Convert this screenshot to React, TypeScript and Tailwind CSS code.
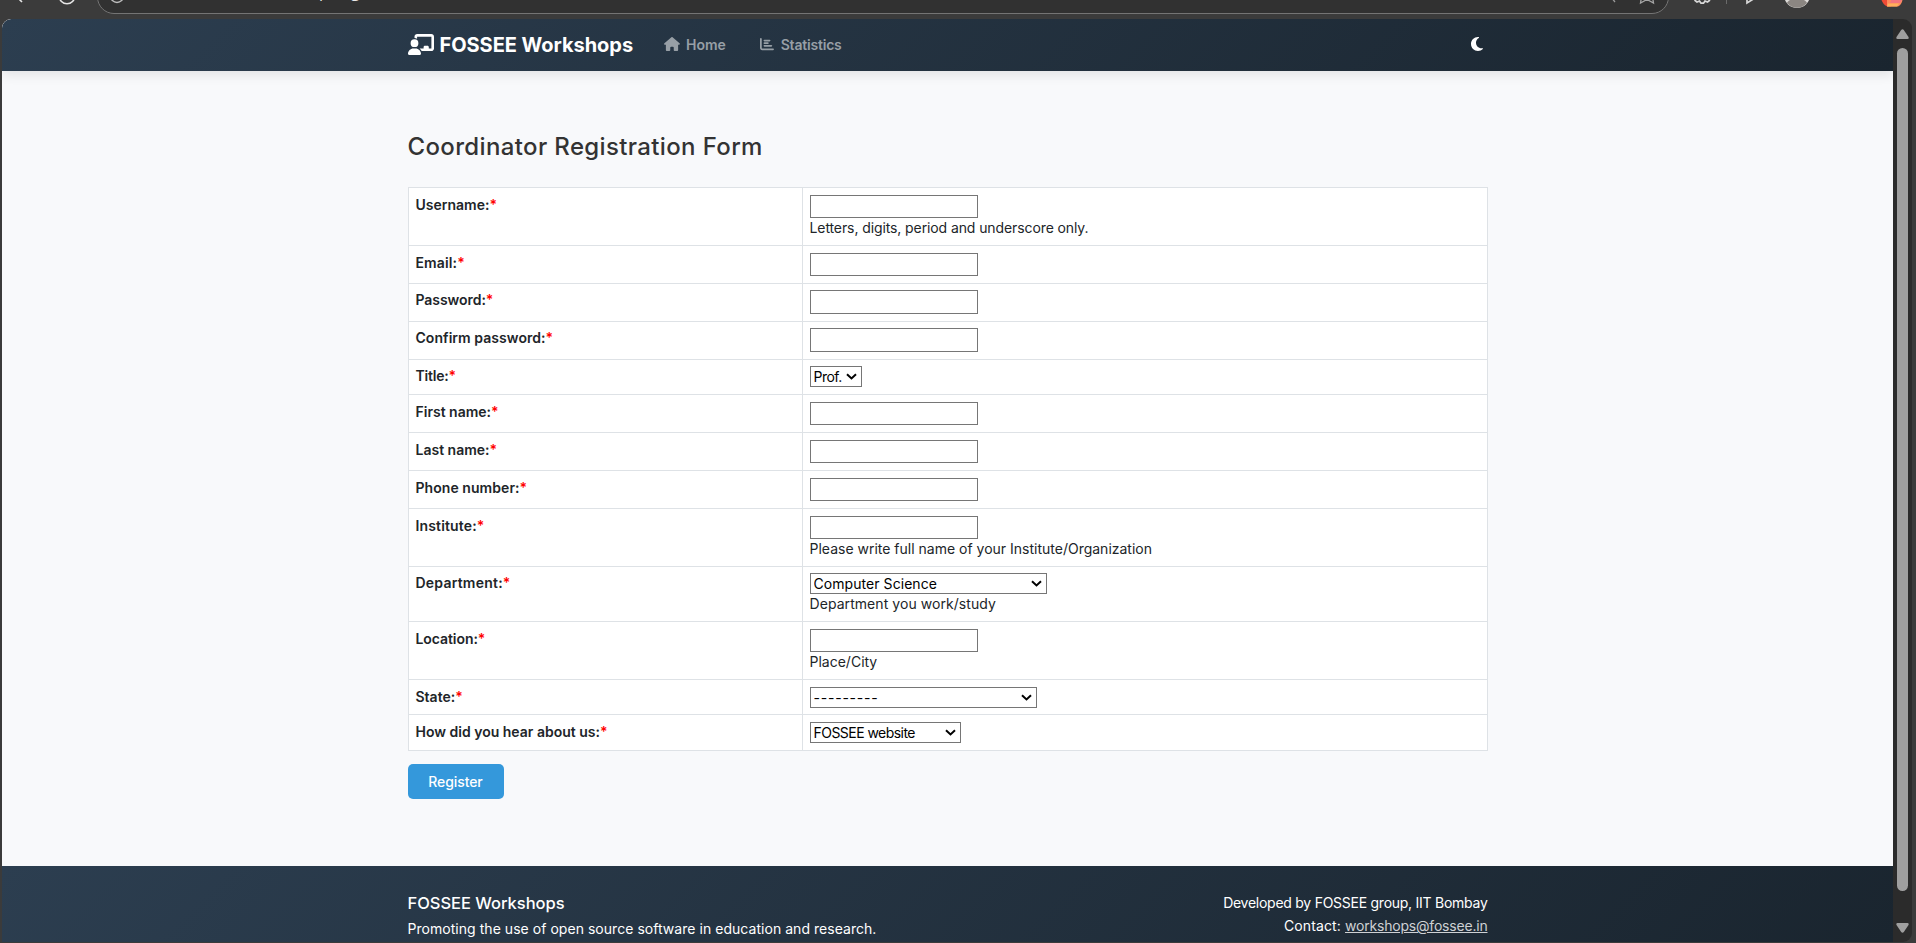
import { FaChalkboardUser, FaChartBar, FaHouse, FaMoon } from "react-icons/fa6";

type Row = {
  label: string;
  labelClass?: string;
  height: string;
  pad: string;
  field?: string;
  option?: string;
  optionClass?: string;
  help?: string;
  helpClass?: string;
};

const rows: Row[] = [
  { label: "Username:", height: "h-[58px]", pad: "pt-[7px]", field: "h-[23px]", help: "Letters, digits, period and underscore only.", helpClass: "tracking-[-0.1px]" },
  { label: "Email:", labelClass: "tracking-[0.12px]", height: "h-[38px]", pad: "pt-[7px]", field: "h-[23px]" },
  { label: "Password:", labelClass: "tracking-[-0.06px]", height: "h-[38px]", pad: "pt-[6px]", field: "h-[24px]" },
  { label: "Confirm password:", labelClass: "tracking-[0.05px]", height: "h-[38px]", pad: "pt-[6px]", field: "h-[24px]" },
  { label: "Title:", labelClass: "tracking-[-0.2px]", height: "h-[35px]", pad: "pt-[6px]", option: "Prof.", optionClass: "w-[52px] tracking-[-0.5px]" },
  { label: "First name:", height: "h-[38px]", pad: "pt-[7px]", field: "h-[23px]" },
  { label: "Last name:", height: "h-[38px]", pad: "pt-[7px]", field: "h-[23px]" },
  { label: "Phone number:", labelClass: "tracking-[0.06px]", height: "h-[38px]", pad: "pt-[7px]", field: "h-[23px]" },
  { label: "Institute:", labelClass: "tracking-[0.15px]", height: "h-[58px]", pad: "pt-[7px]", field: "h-[23px]", help: "Please write full name of your Institute/Organization" },
  { label: "Department:", labelClass: "tracking-[0.22px]", height: "h-[55px]", pad: "pt-[6px]", option: "Computer Science", optionClass: "w-[237px] tracking-[0.06px]", help: "Department you work/study", helpClass: "tracking-[0.06px]" },
  { label: "Location:", labelClass: "tracking-[-0.07px]", height: "h-[58px]", pad: "pt-[7px]", field: "h-[23px]", help: "Place/City" },
  { label: "State:", height: "h-[35px]", pad: "pt-[7px]", option: "---------", optionClass: "w-[227px] tracking-[0.78px] text-[#444]" },
  { label: "How did you hear about us:", height: "h-[36px]", pad: "pt-[7px]", option: "FOSSEE website", optionClass: "w-[151px] tracking-[-0.54px]" },
];

function Toolbar() {
  return (
    <div className="relative h-[19px] shrink-0 overflow-hidden bg-[#3b3b3b]">
      <div className="mt-[-20px] ml-[97px] flex h-[34px] w-[1572px] items-center rounded-full border border-[#747474] bg-[#313131] pl-[149px]">
        <span className="-mt-[12px] font-['Open_Sans',sans-serif] text-[16px] tracking-[0.25px] text-[#e8e8e8]">/workshop/register/</span>
      </div>
      <svg className="absolute top-0 left-0" width="140" height="14" fill="none" stroke="#e6e6e6" strokeWidth="1.6">
        <path d="M17 -3 L22 2" />
        <circle cx="67" cy="-4" r="7.8" />
        <circle cx="117" cy="-4" r="6.5" stroke="#bdbdbd" strokeWidth="1.4" />
      </svg>
      <svg className="absolute top-0 right-0" width="326" height="19" fill="none" stroke="#d8d8d8" strokeWidth="1.5">
        <path d="M21 -3 L25 2" stroke="#9a9a9a" strokeWidth="1.3" />
        <path d="M51.5 -3 L50.5 3 L57 -0.5 L63.5 3 L62.5 -3" stroke="#a5a5a5" strokeWidth="1.3" />
        <path d="M104.5 0 L107 2 L109.5 1 L111 3.2 H113.5 L115 1 L117.5 2 L120 0" strokeWidth="1.7" />
        <path d="M136.5 0 V4" stroke="#6a6a6a" strokeWidth="1" />
        <path d="M157 -4 V3 L165 -2" strokeWidth="1.7" />
        <circle cx="207" cy="-5" r="13" fill="#dedcda" stroke="none" />
        <path d="M197 3 C200 -3 214 -3 217 3 C212 9.3 202 9.3 197 3Z" fill="#8b8682" stroke="none" />
        <path d="M291 -2 H297 L301 6.5 H298 C294 6 292 2 291 -2Z" fill="#ef4b35" stroke="none" />
        <path d="M297 -2 H313 C312 3 310 6.5 307 6.5 H297Z" fill="#ff8b5e" stroke="none" />
        <path d="M302 -2 H313 L310 3 H300Z" fill="#f4757e" stroke="none" />
        <path d="M298 3.5 H309 L307 6.5 H297Z" fill="#ffb05c" stroke="none" />
      </svg>
    </div>
  );
}

function Navbar() {
  return (
    <nav className="relative z-10 flex h-[52px] shrink-0 justify-center rounded-tl-[9px] bg-linear-135 from-[#2c3e50] to-[#1a252f] shadow-[0_4px_12px_rgba(0,0,0,0.09)]">
      <div className="flex w-[1080px] items-center pb-[1px]">
        <FaChalkboardUser className="h-[21px] w-[26px] text-white" />
        <span className="ml-[6px] text-[20px] font-bold tracking-[-0.04px] text-white">FOSSEE Workshops</span>
        <a className="ml-[31px] flex items-center pb-[1px] text-[14px] font-semibold text-[#979fa6]">
          <FaHouse className="mr-[6px] h-[14px] w-[16px]" />
          <span className="tracking-[-0.05px]">Home</span>
        </a>
        <a className="ml-[34px] flex items-center pb-[1px] text-[14px] font-semibold text-[#979fa6]">
          <FaChartBar className="mr-[7px] h-[14px] w-[14px]" />
          <span className="tracking-[-0.2px]">Statistics</span>
        </a>
        <FaMoon className="mr-[3px] mb-[1px] ml-auto h-[16px] w-[16px] text-white" />
      </div>
    </nav>
  );
}

function SelectBox({ option, className }: { option: string; className?: string }) {
  return (
    <div className="relative flex w-fit">
      <select className={"h-[21px] appearance-none border border-[#767676] bg-white pr-0 pl-[3px] text-[14px] leading-[19px] text-black " + (className ?? "")}>
        <option>{option}</option>
      </select>
      <svg className="pointer-events-none absolute top-[7px] right-[5px]" width="11" height="8" viewBox="0 0 11 8" fill="none" stroke="#000" strokeWidth="2">
        <path d="M1 1.2 L5.5 5.4 L10 1.2" />
      </svg>
    </div>
  );
}

function FormRow({ row }: { row: Row }) {
  return (
    <div className={"flex border-b border-[#dee2e6] bg-white " + row.height}>
      <div className={"w-[394px] border-r border-[#dee2e6] pl-[7px] text-[14px] leading-[20px] font-semibold text-[#212529] " + row.pad}>
        <label className={row.labelClass}>{row.label}</label>
        <span className="text-[#ff0000]">*</span>
      </div>
      <div className={"flex flex-1 flex-col items-start border-r border-[#dee2e6] pl-[7px] " + row.pad}>
        {row.option ? (
          <SelectBox option={row.option} className={row.optionClass} />
        ) : (
          <input className={"w-[168px] shrink-0 border border-[#767676] bg-white " + (row.field ?? "")} />
        )}
        {row.help && <span className={"text-[14px] leading-[19px] text-[#212529] " + (row.helpClass ?? "")}>{row.help}</span>}
      </div>
    </div>
  );
}

function Scrollbar() {
  return (
    <div className="flex w-[19px] shrink-0 flex-col items-center rounded-r-[9px] bg-[#2b2b2b] pr-px">
      <svg className="mt-[10px] shrink-0" width="13" height="10" fill="#9f9f9f">
        <path d="M6.5 0.3 C7 0.3 7.4 0.5 7.8 1 L12.5 8 C13 9 12.6 10 11.6 10 H1.4 C0.4 10 0 9 0.5 8 L5.2 1 C5.6 0.5 6 0.3 6.5 0.3Z" />
      </svg>
      <div className="mt-[9px] h-[843px] w-[11px] shrink-0 rounded-full bg-[#9f9f9f]" />
      <svg className="mt-[32px] shrink-0" width="13" height="10" fill="#9f9f9f">
        <path d="M6.5 9.7 C7 9.7 7.4 9.5 7.8 9 L12.5 2 C13 1 12.6 0 11.6 0 H1.4 C0.4 0 0 1 0.5 2 L5.2 9 C5.6 9.5 6 9.7 6.5 9.7Z" />
      </svg>
    </div>
  );
}

export default function App() {
  return (
    <div className="flex h-[943px] w-[1916px] flex-col overflow-hidden bg-[#3b3b3b] font-['Inter',sans-serif]">
      <Toolbar />
      <div className="flex h-[923px] shrink-0 pl-[2px]">
        <div className="flex w-[1891px] flex-col overflow-hidden rounded-tl-[9px] bg-[#f8f9fb]">
          <Navbar />
          <main className="flex h-[795px] shrink-0 flex-col items-center">
            <div className="w-[1080px]">
              <h2 className="mt-[59px] text-[24px] leading-[33px] font-medium tracking-[0.36px] text-[#333]">Coordinator Registration Form</h2>
              <div className="mt-[24px] border-t border-l border-[#dee2e6]">
                {rows.map((row) => (
                  <FormRow key={row.label} row={row} />
                ))}
              </div>
              <button className="mt-[13px] flex h-[35px] w-[96px] items-center justify-center rounded-[5px] bg-[#3498db] text-[14px] font-medium tracking-[-0.1px] text-white">
                Register
              </button>
            </div>
          </main>
          <footer className="flex h-[76px] shrink-0 justify-center overflow-hidden bg-linear-135 from-[#2c3e50] to-[#1a252f] text-[14px] text-white">
            <div className="flex w-[1080px] justify-between pt-[25px]">
              <div>
                <h5 className="text-[16.5px] leading-[24px] font-medium tracking-[-0.02px]">FOSSEE Workshops</h5>
                <p className="mt-[2px] leading-[23px] tracking-[0.04px]">Promoting the use of open source software in education and research.</p>
              </div>
              <div className="text-right">
                <p className="leading-[23px] tracking-[-0.26px]">Developed by FOSSEE group, IIT Bombay</p>
                <p className="leading-[23px]">
                  <span className="tracking-[0.12px]">Contact: </span>
                  <a className="tracking-[-0.2px] text-[#ced1d4] underline">workshops@fossee.in</a>
                </p>
              </div>
            </div>
          </footer>
        </div>
        <Scrollbar />
      </div>
    </div>
  );
}
